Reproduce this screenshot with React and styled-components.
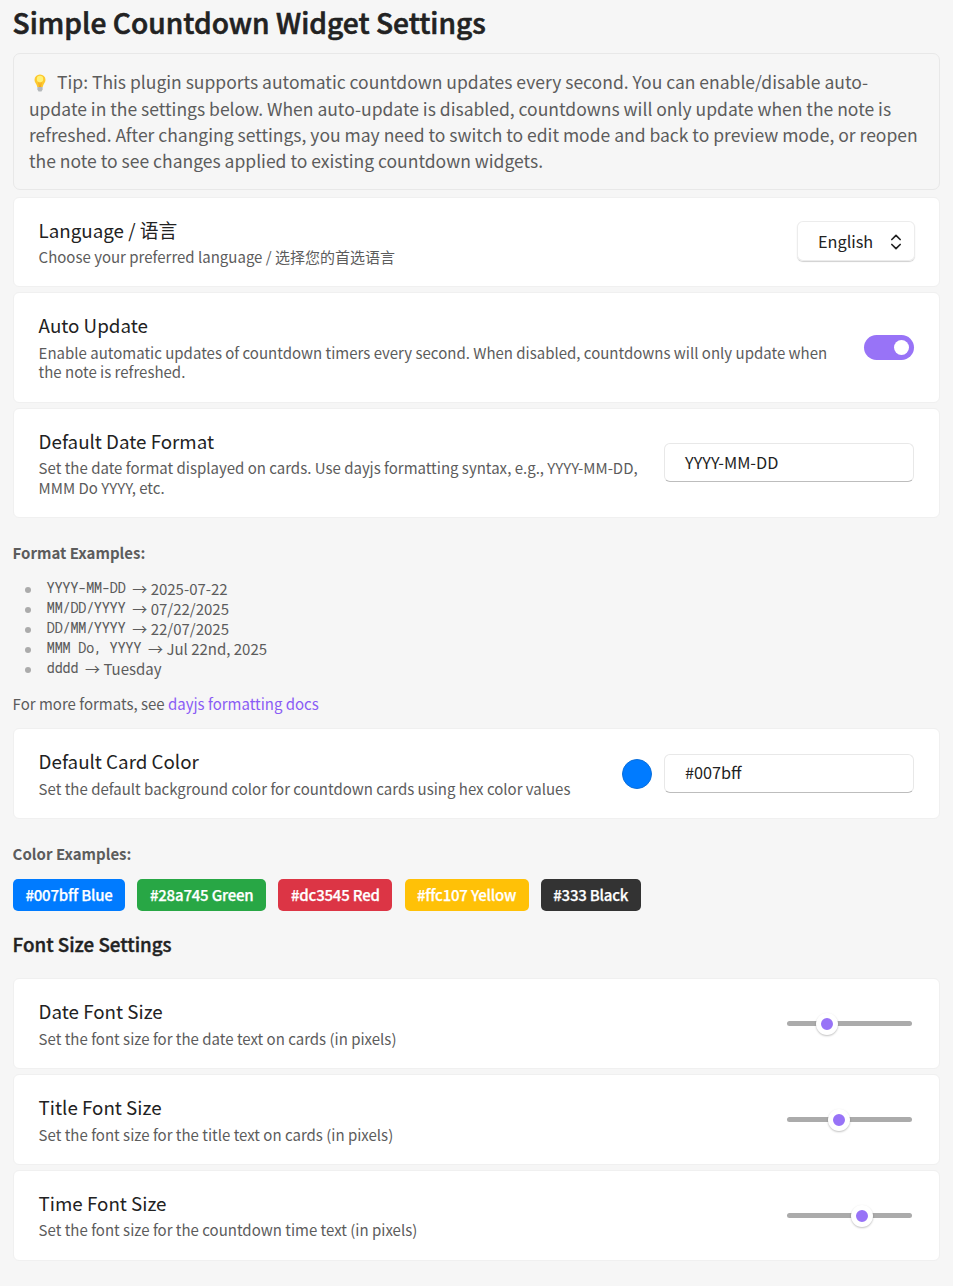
import React from "react";
import styled, { createGlobalStyle } from "styled-components";
import { ChevronsUpDown } from "lucide-react";

const Global = createGlobalStyle`
  * { box-sizing: border-box; }
  body {
    margin: 0;
    background: #f6f6f6;
    color: #5c5c5c;
    font-family: "Noto Sans CJK SC", "Noto Sans", sans-serif;
    font-size: 15px;
    line-height: 20px;
  }
`;

const Page = styled.main`
  width: 953px;
  height: 1286px;
  overflow: hidden;
  padding: 4px 13px 0;
`;

const Title = styled.h1`
  margin: 0 0 13px -0.4px;
  height: 36px;
  font-size: 28.125px;
  line-height: 36px;
  font-weight: 500;
  letter-spacing: 0.02px;
  color: #222;
  -webkit-text-stroke: 0.6px #222;
`;

const Tip = styled.div`
  border: 1px solid #e8e8e8;
  border-radius: 7px;
  padding: 15.25px 15px 0;
  height: 137px;
  margin-bottom: 7px;
  font-size: 17.5px;
  line-height: 26.25px;
  white-space: nowrap;
`;

const Bulb = styled.svg`
  width: 12px;
  height: 18px;
  margin: 0 11px 0 5px;
  vertical-align: -3px;
`;

const Card = styled.section`
  display: flex;
  align-items: center;
  justify-content: space-between;
  height: ${(p) => p.$h}px;
  margin-bottom: 5px;
  padding: 0 25px;
  background: #fff;
  border: 1px solid #f0f0f0;
  border-radius: 6px;
`;

const Info = styled.div`
  align-self: flex-start;
  margin: ${(p) => p.$top}px 0 0 -0.4px;
  white-space: nowrap;
`;

const Name = styled.div`
  font-size: 18.75px;
  line-height: 24px;
  color: #222;
`;

const Desc = styled.div`
  margin-top: ${(p) => p.$gap}px;
  line-height: 19.5px;
`;

const Controls = styled.div`
  display: flex;
  align-items: center;
  gap: 12px;
`;

const Select = styled.div`
  display: flex;
  align-items: center;
  justify-content: space-between;
  width: 118px;
  height: 40px;
  margin: 0 -1px 2px 0;
  padding: 0 9px 0 21px;
  border-radius: 6px;
  background: #fff;
  color: #222;
  font-size: 16.25px;
  box-shadow: inset 0 0 0 1px #ececec, 0 1px 1px #d0d0d0;

  svg {
    margin-top: 2px;
  }
`;

const Field = styled.div`
  width: 250px;
  height: 39px;
  margin-bottom: ${(p) => p.$lift || 0}px;
  padding: 0 20px;
  border: 1px solid #e8e8e8;
  border-bottom-color: #bdbdbd;
  border-radius: 6px;
  color: #222;
  font-size: 16.25px;
  line-height: ${(p) => (p.$lift ? 37 : 35)}px;
`;

const Toggle = styled.div`
  display: flex;
  align-items: center;
  justify-content: flex-end;
  width: 50px;
  height: 25px;
  padding-right: 5px;
  border-radius: 13px;
  background: #9873f7;
`;

const Knob = styled.span`
  width: 15px;
  height: 15px;
  border-radius: 50%;
  background: #fff;
`;

const Swatch = styled.span`
  width: 30px;
  height: 30px;
  border-radius: 50%;
  background: #007bff;
  border: 1px solid #0a6fdc;
`;

const Label = styled.div`
  margin: 25px 0 0 -0.4px;
  font-weight: 600;
`;

const List = styled.ul`
  margin: 16px 0 15px;
  padding: 0;
  list-style: none;
`;

const Item = styled.li`
  display: flex;
  align-items: center;
  height: 20px;
  white-space: pre;

  &::before {
    content: "";
    width: 6px;
    height: 6px;
    margin: 1px 15.5px 0 12px;
    border-radius: 50%;
    background: #ababab;
  }
`;

const Code = styled.code`
  margin: 0 7px 2px 0;
  font-family: "Roboto Mono", "Liberation Mono", monospace;
  font-size: 14px;
  letter-spacing: -0.525px;
`;

const Link = styled.a`
  color: #8a5cf5;
`;

const More = styled.div`
  margin: 0 0 14px -0.4px;
`;

const Chips = styled.div`
  display: flex;
  gap: 12.2px;
  margin-top: 15px;
`;

const Chip = styled.span`
  width: ${(p) => p.$w}px;
  height: 32px;
  border-radius: 5px;
  background: ${(p) => p.$color};
  color: #fff;
  font-weight: 500;
  letter-spacing: -0.2px;
  line-height: 32px;
  text-align: center;
  white-space: nowrap;
  -webkit-text-stroke: 0.25px #fff;
`;

const Heading = styled.h2`
  margin: 20px 0 22px -0.4px;
  font-size: 18.75px;
  line-height: 25px;
  font-weight: 500;
  color: #222;
  -webkit-text-stroke: 0.4px #222;
`;

const Track = styled.div`
  width: 125px;
  height: 5px;
  margin-right: 2px;
  border-radius: 3px;
  background: #ababab;
`;

const Thumb = styled.div`
  width: 22px;
  height: 22px;
  margin-top: -8px;
  border: 5px solid #fff;
  border-radius: 50%;
  background: #9873f7;
  box-shadow: 0 1px 2px rgba(0, 0, 0, 0.25);
`;

const Setting = ({ h, top = 20, gap = 5, name, lines, children }) => (
  <Card $h={h}>
    <Info $top={top}>
      <Name>{name}</Name>
      <Desc $gap={gap}>
        {lines.map((l) => (
          <div key={l}>{l}</div>
        ))}
      </Desc>
    </Info>
    <Controls>{children}</Controls>
  </Card>
);

const Slider = ({ value }) => (
  <Track>
    <Thumb style={{ marginLeft: value }} />
  </Track>
);

const formats = [
  ["YYYY-MM-DD", "2025-07-22"],
  ["MM/DD/YYYY", "07/22/2025"],
  ["DD/MM/YYYY", "22/07/2025"],
  ["MMM Do, YYYY", "Jul 22nd, 2025"],
  ["dddd", "Tuesday"],
];

const chips = [
  ["#007bff", "Blue", 112],
  ["#28a745", "Green", 129],
  ["#dc3545", "Red", 114],
  ["#ffc107", "Yellow", 124],
  ["#333", "Black", 100],
];

export default function App() {
  return (
    <Page>
      <Global />
      <Title>Simple Countdown Widget Settings</Title>
      <Tip>
        <Bulb viewBox="0 0 12 18">
          <path d="M6 .5A5.4 5.4 0 0 0 .5 6c0 2.700 2.300 3.700 2.800 7h5.400c.5-3.300 2.800-4.300 2.800-7A5.400 5.400 0 0 0 6 .5z" fill="#fdc92e" />
          <ellipse cx="6" cy="5" rx="3.200" ry="3.300" fill="#fff176" />
          <path d="M4.800 8.500 5.500 13h1l.7-4.500" fill="none" stroke="#f19a1f" strokeWidth=".8" />
          <path d="M3.400 13h5.200v2.500L7.500 17.500h-3l-1.100-2z" fill="#b4b8ba" />
        </Bulb>
        Tip: This plugin supports automatic countdown updates every second. You can enable/disable auto-
        <br />
        update in the settings below. When auto-update is disabled, countdowns will only update when the note is
        <br />
        refreshed. After changing settings, you may need to switch to edit mode and back to preview mode, or reopen
        <br />
        the note to see changes applied to existing countdown widgets.
      </Tip>

      <Setting h={90} top={19.75} name="Language / 语言" lines={["Choose your preferred language / 选择您的首选语言"]}>
        <Select>
          English
          <ChevronsUpDown size={20} strokeWidth={2} />
        </Select>
      </Setting>
      <Setting
        h={111}
        gap={5.5}
        name="Auto Update"
        lines={[
          "Enable automatic updates of countdown timers every second. When disabled, countdowns will only update when",
          "the note is refreshed.",
        ]}
      >
        <Toggle>
          <Knob />
        </Toggle>
      </Setting>
      <Setting
        h={110}
        name="Default Date Format"
        lines={[
          "Set the date format displayed on cards. Use dayjs formatting syntax, e.g., YYYY-MM-DD,",
          "MMM Do YYYY, etc.",
        ]}
      >
        <Field $lift={2}>YYYY-MM-DD</Field>
      </Setting>

      <Label>Format Examples:</Label>
      <List>
        {formats.map(([code, out]) => (
          <Item key={code}>
            <Code>{code}</Code>
            <span>→ {out}</span>
          </Item>
        ))}
      </List>
      <More>
        For more formats, see <Link>dayjs formatting docs</Link>
      </More>

      <Setting
        h={91}
        gap={6}
        name="Default Card Color"
        lines={["Set the default background color for countdown cards using hex color values"]}
      >
        <Swatch />
        <Field>#007bff</Field>
      </Setting>

      <Label>Color Examples:</Label>
      <Chips>
        {chips.map(([color, label, w]) => (
          <Chip key={color} $color={color} $w={w}>
            {color} {label}
          </Chip>
        ))}
      </Chips>

      <Heading>Font Size Settings</Heading>
      <Setting h={91} gap={6} name="Date Font Size" lines={["Set the font size for the date text on cards (in pixels)"]}>
        <Slider value={29} />
      </Setting>
      <Setting h={91} gap={6} name="Title Font Size" lines={["Set the font size for the title text on cards (in pixels)"]}>
        <Slider value={41} />
      </Setting>
      <Setting h={91} name="Time Font Size" lines={["Set the font size for the countdown time text (in pixels)"]}>
        <Slider value={64} />
      </Setting>
    </Page>
  );
}
